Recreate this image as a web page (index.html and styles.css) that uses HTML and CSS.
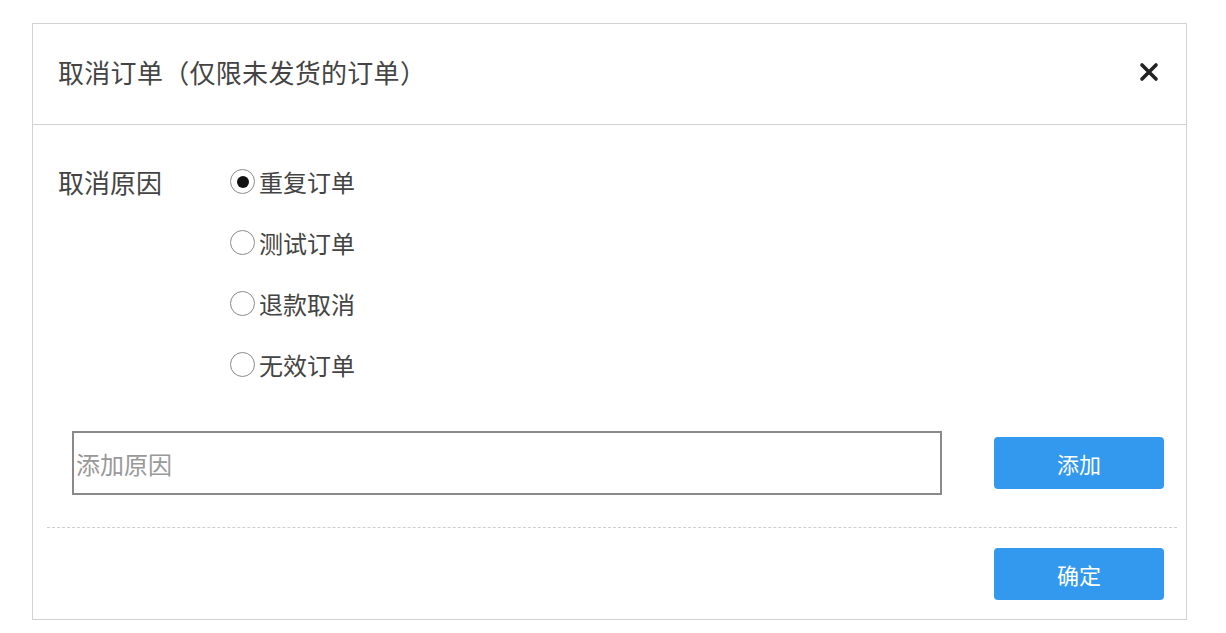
FILE: index.html
```html
<!DOCTYPE html>
<html lang="zh-CN">
<head>
  <meta charset="UTF-8" />
  <title>取消订单</title>
  <link rel="stylesheet" href="styles.css">
</head>
<body>

  <div class="dialog">
    <div class="dialog-header">
      <h2>取消订单（仅限未发货的订单）</h2>
      <button class="close-btn" type="button" aria-label="关闭">
        <svg width="20" height="20" viewBox="0 0 20 20">
          <path d="M3 3 L17 17 M17 3 L3 17" stroke="#222" stroke-width="3.6" stroke-linecap="round"/>
        </svg>
      </button>
    </div>

    <div class="dialog-body">
      <div class="reason-row">
        <span class="reason-label">取消原因</span>
        <div class="reason-list">
          <label class="radio"><input type="radio" name="reason" checked>重复订单</label>
          <label class="radio"><input type="radio" name="reason">测试订单</label>
          <label class="radio"><input type="radio" name="reason">退款取消</label>
          <label class="radio"><input type="radio" name="reason">无效订单</label>
        </div>
      </div>

      <div class="add-row">
        <input type="text" class="reason-input" placeholder="添加原因">
        <button type="button" class="btn">添加</button>
      </div>
    </div>

    <div class="dialog-footer">
      <button type="button" class="btn">确定</button>
    </div>
  </div>

</body>
</html>
```

FILE: styles.css
```css
* {
  box-sizing: border-box;
  margin: 0;
  padding: 0;
}

body {
  background: #fff;
  font-family: "Noto Sans CJK SC", "Noto Sans", sans-serif;
  color: #444;
  padding: 23px 0 0 32px;
}

.dialog {
  width: 1155px;
  height: 597px;
  border: 1px solid #d2d2d2;
  background: #fff;
}

.dialog-header {
  height: 101px;
  border-bottom: 1px solid #d2d2d2;
  display: flex;
  align-items: center;
  justify-content: space-between;
  padding: 0 27px 0 25px;
}

.dialog-header h2 {
  font-size: 26px;
  font-weight: normal;
  letter-spacing: 0.3px;
  color: #444;
  margin-top: -5px;
}

.close-btn {
  border: none;
  background: none;
  width: 20px;
  height: 20px;
  display: flex;
  margin-top: -4px;
  cursor: pointer;
}

.dialog-body {
  padding: 26px 22px 0 25px;
}

.reason-row {
  display: flex;
}

.reason-label {
  width: 172px;
  font-size: 26px;
  line-height: 61px;
}

.reason-list {
  display: flex;
  flex-direction: column;
}

.radio {
  display: flex;
  align-items: center;
  gap: 4px;
  font-size: 24px;
  line-height: 61px;
  cursor: pointer;
}

.radio input {
  appearance: none;
  width: 25px;
  height: 25px;
  border: 1.5px solid #8a8a8a;
  border-radius: 50%;
  display: grid;
  place-items: center;
  margin: 0;
}

.radio input:checked::after {
  content: "";
  width: 12px;
  height: 12px;
  border-radius: 50%;
  background: #111;
}

.add-row {
  display: flex;
  align-items: center;
  gap: 52px;
  margin-top: 36px;
  padding-left: 14px;
}

.reason-input {
  width: 870px;
  height: 64px;
  border: 2px solid #8a8a8a;
  padding: 0 2px;
  font-size: 24px;
  font-family: inherit;
  color: #333;
  outline: none;
}

.reason-input::placeholder {
  color: #999;
}

.btn {
  width: 170px;
  height: 52px;
  border: none;
  border-radius: 4px;
  background: #3399ee;
  color: #fff;
  font-size: 22px;
  font-family: inherit;
  cursor: pointer;
}

.dialog-footer {
  margin: 32px 9px 0 14px;
  border-top: 1px dashed #cfcfcf;
  padding: 20px 13px 0 0;
  display: flex;
  justify-content: flex-end;
}
```
